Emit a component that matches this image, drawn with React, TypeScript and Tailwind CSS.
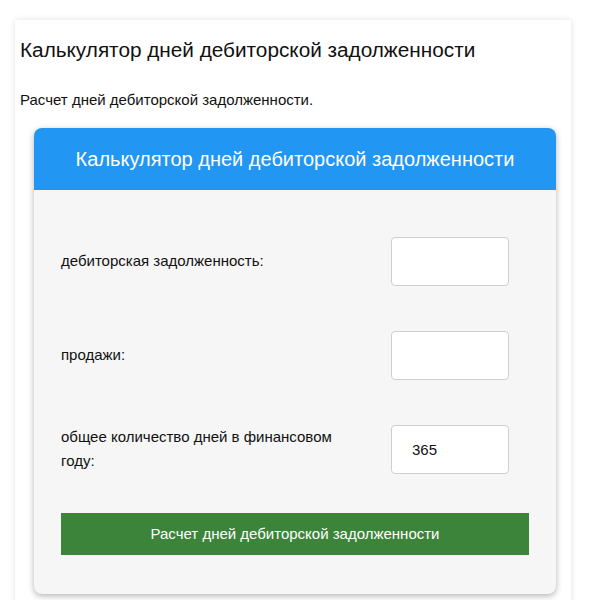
export default function App() {
  const rows = [
    { label: "дебиторская задолженность:", value: "" },
    { label: "продажи:", value: "" },
    { label: "общее количество дней в финансовом году:", value: "365" },
  ];

  return (
    <div className="h-[600px] overflow-y-scroll bg-white font-['Liberation_Sans',Arial,sans-serif] text-[#111]">
      <div className="min-h-[1335px] pt-[20px]">
        {/* Outer article card */}
        <div className="ml-[15px] w-[556px] min-h-[1300px] bg-white px-[5px] pt-[18px] shadow-[0_0_6px_rgba(0,0,0,0.12)]">
          <h1 className="text-[20.75px] leading-[24px] font-normal">
            Калькулятор дней дебиторской задолженности
          </h1>
          <p className="mt-[28px] text-[15px] leading-[20px]">
            Расчет дней дебиторской задолженности.
          </p>

          {/* Calculator card */}
          <div className="mt-[18px] ml-[14px] w-[522px] rounded-[8px] overflow-hidden bg-[#f6f6f6] shadow-[0_2px_6px_rgba(0,0,0,0.3)]">
            <div className="h-[62px] bg-[#2196f3] flex items-center justify-center">
              <h2 className="text-[20px] leading-[24px] text-white font-normal">
                Калькулятор дней дебиторской задолженности
              </h2>
            </div>

            <div className="px-[27px] pt-[47px] pb-[39px]">
              <div className="flex flex-col gap-[46px]">
                {rows.map((r) => (
                  <div key={r.label} className="flex items-center h-[48px]">
                    <label className="w-[290px] text-[15px] leading-[24px] text-[#111]">
                      {r.label}
                    </label>
                    <input
                      type="text"
                      defaultValue={r.value}
                      className="ml-auto mr-[20px] w-[118px] h-[49px] bg-white border border-[#cfcfcf] rounded-[4px] pl-[20px] text-[15px] text-[#111] outline-none"
                    />
                  </div>
                ))}
              </div>

              <button className="mt-[40px] w-full h-[42px] bg-[#3b8439] text-white text-[15px] leading-[20px]">
                Расчет дней дебиторской задолженности
              </button>
            </div>
          </div>
        </div>
      </div>
    </div>
  );
}
